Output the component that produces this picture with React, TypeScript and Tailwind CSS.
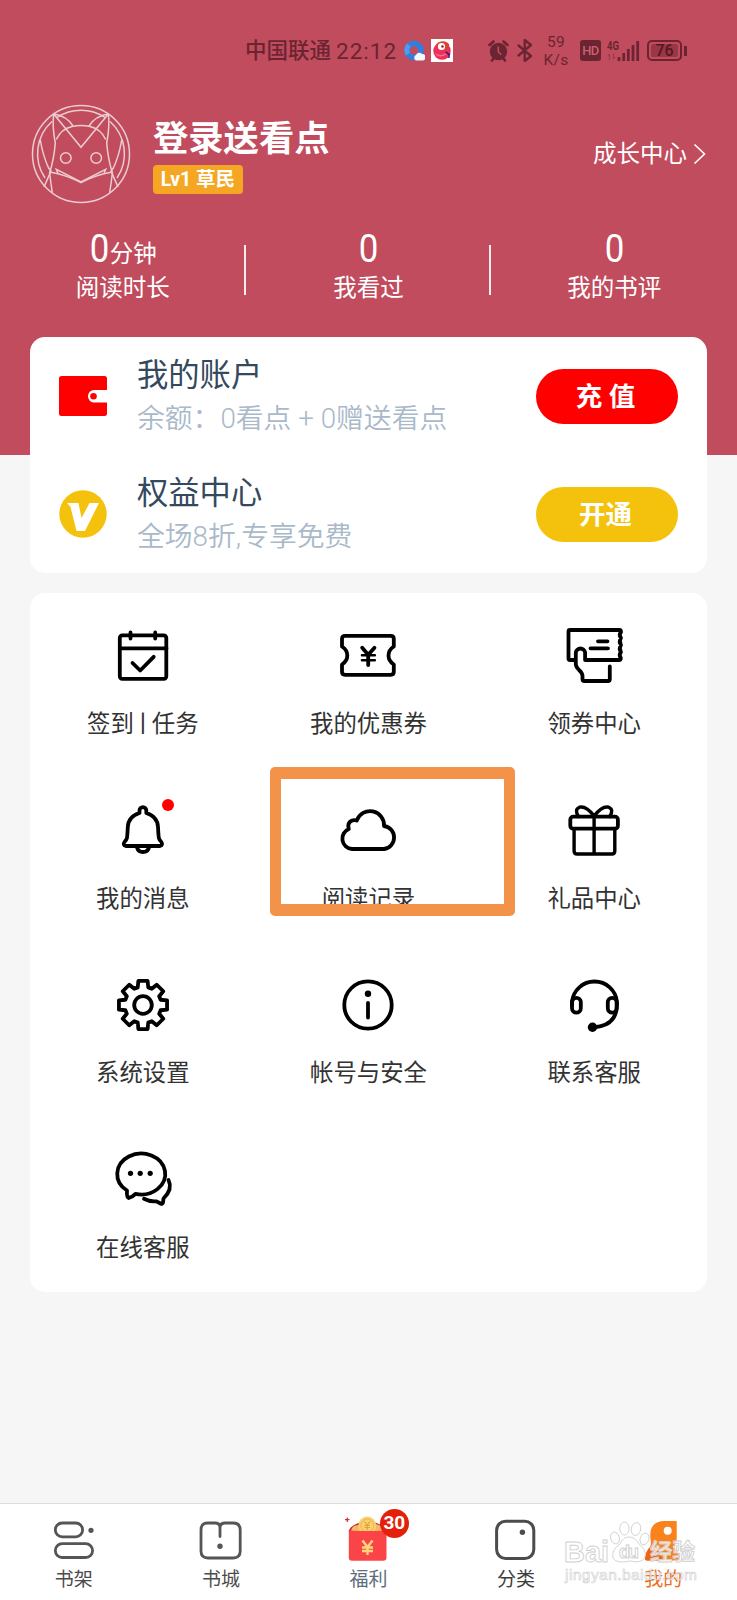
import React from 'react';

const INK = '#6b2431';

const StatusBar: React.FC = () => (
  <div className="flex h-[101px] items-center pl-[245px] text-[#6b2431]">
    <span className="w-[91px] whitespace-nowrap text-[21.500px] leading-6 font-medium">中国联通</span>
    <span className="w-[68px] whitespace-nowrap text-[22.500px] leading-6 tracking-[1px]">22:12</span>
    <svg width="21" height="21" viewBox="0 0 21 21">
      <circle cx="10" cy="10.500" r="7" fill="none" stroke="#2f7fe0" strokeWidth="5.500" />
      <path d="M4 14a7 7 0 0 1 1-9" fill="none" stroke="#4b9dee" strokeWidth="5" />
      <path d="M12 20.500a3 3 0 0 1 0-5.500a3.500 3.500 0 0 1 6-1a3.300 3.300 0 0 1 1 6.500z" fill="#f4f8ff" />
    </svg>
    <svg className="ml-[6px]" width="22" height="23" viewBox="0 0 22 23">
      <rect width="22" height="23" fill="#fff" />
      <circle cx="11" cy="12" r="8.700" fill="#ee2f5b" />
      <path d="M4.500 7a8 8 0 0 1 14-1l-4 6z" fill="#d8432e" />
      <circle cx="10.500" cy="7.500" r="3.600" fill="#fff" />
      <circle cx="11.500" cy="7.500" r="1.300" fill="#a3202f" />
      <path d="M5 15q5 4 11-1" fill="none" stroke="#ff6d8d" strokeWidth="1.500" />
      <path d="M14.500 13l4.500 3m-1-2v5" stroke="#46217c" strokeWidth="1.600" />
    </svg>
    <svg className="ml-[35px]" width="21" height="22" viewBox="0 0 21 22">
      <circle cx="10.500" cy="11.500" r="8.700" fill={INK} />
      <path d="M1.500 5l4-3.500M19.500 5l-4-3.500M4 20.500l2-2.500M17 20.500l-2-2.500" stroke={INK} strokeWidth="2.600" strokeLinecap="round" />
      <path d="M10.300 6.500v5.200l3 3" fill="none" stroke="#c14c5e" strokeWidth="1.600" />
    </svg>
    <svg className="ml-[8px]" width="16" height="23" viewBox="0 0 16 23">
      <path d="M1.500 6.500l12.500 10.500-6.300 5V1l6.300 5L1.500 16.500" fill="none" stroke={INK} strokeWidth="2.300" strokeLinejoin="round" strokeLinecap="round" />
    </svg>
    <span className="ml-[8px] flex w-[30px] flex-col items-center text-[15.500px] leading-[18px] tracking-[0.3px]">
      <span>59</span>
      <span>K/s</span>
    </span>
    <span className="ml-[9px] flex h-[21px] w-[21px] items-center justify-center rounded-[3px] bg-[#6b2431] text-[13px] font-medium tracking-[-0.5px] text-[#c9606f]">HD</span>
    <svg className="ml-[5px] overflow-visible" width="35" height="22" viewBox="0 0 35 22">
      <text x="1" y="9.500" fontSize="12" fontWeight="700" fontFamily="Roboto" fill={INK} textLength="12" lengthAdjust="spacingAndGlyphs">4G</text>
      <path d="M3.500 14v6m-1.500-4l1.500-2M7.500 13v6m1.500-2l-1.500 2" stroke="#9c3b4b" strokeWidth="1.200" fill="none" />
      <path d="M13 17v4M17.700 13v8M22.300 9v12M27 5v16M31.700 1v20" stroke={INK} strokeWidth="2.700" />
    </svg>
    <div className="ml-[6px] flex items-center">
      <div className="flex h-[21px] w-[35px] items-center justify-center rounded-[5px] border-2 border-[#6b2431] p-[2px]">
        <div className="flex h-full w-full items-center justify-center rounded-[2px] bg-[#9a3746] text-[16px] font-medium text-[#521722]">76</div>
      </div>
      <div className="ml-[2px] h-[10px] w-[3px] bg-[#6b2431]" />
    </div>
  </div>
);

const Avatar: React.FC = () => (
  <svg width="100" height="100" viewBox="0 0 100 100" fill="none" stroke="#eccdd1" strokeWidth="1.500">
    <circle cx="50" cy="50" r="48.500" />
    <path d="M26 13.500A43.300 43.300 0 0 1 74 13.500M79 17.500A43.300 43.300 0 0 1 86 74M21 17.500A43.300 43.300 0 0 0 14 74" />
    <path d="M22.700 10L50 43.300L77.300 10" />
    <path d="M22.700 10Q36 12 42 22M77.300 10Q64 12 58 22" />
    <path d="M22.700 10Q21 22 24.300 39Q23 55 18.600 69Q20 80 21.300 88.700M77.300 10Q79 22 75.700 39Q77 55 81.400 69Q80 80 78.700 88.700" />
    <path d="M25.300 35.500Q30 25 41 22.500Q50 20.500 59 22.500Q70 25 74.700 35.500" />
    <path d="M9.300 36Q12 52 17.600 64L20 67L13 83M90.700 36Q88 52 82.400 64L80 67L87 83" />
    <path d="M18.600 68Q36 71 50 78.700Q64 71 81.400 68" />
    <path d="M27 69.500L25.300 65.300L50 78L74.700 65.300L73 69.500" />
    <circle cx="34.800" cy="54" r="5.300" />
    <circle cx="65.200" cy="54" r="5.300" />
  </svg>
);

// outline of an eight-tooth cog around (36, 36)
const gearPath = () => {
  const points: string[] = [];
  for (let i = 0; i < 8; i++) {
    const base = (i * Math.PI) / 4;
    [[-0.29, 18.4], [-0.19, 24.5], [0.19, 24.5], [0.29, 18.4]].forEach(([a, r]) => {
      points.push(`${(36 + r * Math.sin(base + a)).toFixed(2)} ${(36 - r * Math.cos(base + a)).toFixed(2)}`);
    });
  }
  return `M${points.join('L')}Z`;
};

const menuItems = [
  {
    id: 'tasks',
    label: (
      <>
        签到<span className="-mx-[2.700px]">丨</span>任务
      </>
    ),
    icon: (
      <>
        <rect x="12.800" y="15.300" width="46.500" height="43.500" rx="2.500" />
        <path d="M13 28.300H59.500M23.500 12.500V18.500M48.200 12.500V18.500M25.500 43L33.200 50.500L46.700 36.800" />
      </>
    ),
  },
  {
    id: 'coupons',
    label: '我的优惠券',
    icon: (
      <>
        <path d="M13 15.800H58.800Q61.800 15.800 61.800 18.800V26.500Q56.500 30 56.500 35.500Q56.500 41 61.800 44.500V51.800Q61.800 54.800 58.800 54.800H13Q10 54.800 10 51.800V44.500Q15.300 41 15.300 35.500Q15.300 30 10 26.500V18.800Q10 15.800 13 15.800Z" />
        <path d="M30.200 27.800L36.200 34.800L42.500 27.800M36.200 35V45" />
        <path d="M30 35.300H42.800M30 40.300H42.800" strokeWidth="2.600" />
      </>
    ),
  },
  {
    id: 'claim',
    label: '领券中心',
    icon: (
      <>
        <path d="M17 40H12Q10.500 40 10.500 38.500V11.500Q10.500 10 12 10H61.500Q63 10 63 12Q60.500 15 63 18Q60.500 21.500 63 25Q60.500 28.500 63 32Q60.500 35 62.800 38Q62.800 40 61 40H27.100V32.500A4.700 4.700 0 0 0 17.800 32.500V44.500Q18 47 21 50Q24.500 53 24.500 56V59Q24.500 61 26.500 61H50Q51.800 61 51.800 59V46.500" />
        <path d="M40 21.300H49.500M32.500 28.300H50" />
      </>
    ),
  },
  {
    id: 'messages',
    label: '我的消息',
    dot: true,
    icon: (
      <>
        <path d="M32.500 18V15.500A3.400 3.400 0 0 1 39.300 15.500V18Q50.500 21.500 51 32Q51.500 42 52 43.500Q52.500 45 54 46.500Q56.500 50 53 51H18.800Q15.300 50 17.800 46.500Q19.300 45 19.800 43.500Q20.300 42 20.800 32Q21.300 21.500 32.500 18Z" />
        <path d="M30 52.500A6.200 6 0 0 0 42 52.500" />
      </>
    ),
  },
  {
    id: 'history',
    label: '阅读记录',
    icon: <path d="M20 54A10.400 10.400 0 0 1 16.800 34Q15 28 19.500 25.800Q22 24.500 24.800 25.500A14 14 0 0 1 52 31A11.600 11.600 0 0 1 52 54Z" />,
  },
  {
    id: 'gifts',
    label: '礼品中心',
    icon: (
      <>
        <rect x="12.300" y="21.700" width="47.600" height="12" rx="3" />
        <path d="M16.100 33.700V56Q16.100 59 19.100 59H53.800Q56.800 59 56.800 56V33.700M36.100 21V59" strokeWidth="3.400" />
        <path d="M20.500 21.500Q16 14.500 21.500 12.200Q28 10.500 36.100 21M51.700 21.500Q56.200 14.500 50.700 12.200Q44.200 10.500 36.100 21" strokeWidth="3.400" />
      </>
    ),
  },
  {
    id: 'settings',
    label: '系统设置',
    icon: (
      <>
        <path d={gearPath()} />
        <circle cx="36" cy="36" r="8.800" />
      </>
    ),
  },
  {
    id: 'security',
    label: '帐号与安全',
    icon: (
      <>
        <circle cx="36" cy="36" r="23.700" />
        <circle cx="36" cy="24.700" r="3.200" fill="#000" stroke="none" />
        <path d="M36 33.800V48.500" />
      </>
    ),
  },
  {
    id: 'contact',
    label: '联系客服',
    icon: (
      <>
        <path d="M14 36V33A22.600 22.600 0 0 1 59 33V36Q58.500 57 35 58.300" />
        <rect x="14" y="28.800" width="8.800" height="14.800" rx="4.400" />
        <rect x="49.800" y="28.800" width="8.800" height="14.800" rx="4.400" />
        <circle cx="34.500" cy="58.300" r="4.700" fill="#000" stroke="none" />
      </>
    ),
  },
  {
    id: 'online',
    label: '在线客服',
    icon: (
      <>
        <path d="M20 46.500A24 20.500 0 1 1 28.500 49.900Q25 53.500 21.500 54Q19.500 53.500 20 46.500Z" />
        <path d="M61.500 36Q66 45 56.500 54.500L56 58.500Q55.500 60.500 53.500 59.500L49.500 57.300Q43 58 37 54.800" />
        <g fill="#000" stroke="none">
          <circle cx="23.500" cy="29.300" r="2.600" />
          <circle cx="33.200" cy="29.300" r="2.600" />
          <circle cx="43.200" cy="29.300" r="2.600" />
        </g>
      </>
    ),
  },
];

const stats = [
  { value: '0', unit: '分钟', label: '阅读时长' },
  { value: '0', unit: '', label: '我看过' },
  { value: '0', unit: '', label: '我的书评' },
];

const navItems = [
  {
    label: '书架',
    color: 'text-[#4c4c4c]',
    icon: (
      <g fill="none" stroke="#555" strokeWidth="2.800">
        <rect x="3.300" y="4" width="27.300" height="13.800" rx="6.900" />
        <rect x="3.300" y="24.700" width="37.300" height="13.800" rx="6.900" />
        <circle cx="39" cy="11.300" r="2.600" fill="#555" stroke="none" />
      </g>
    ),
  },
  {
    label: '书城',
    color: 'text-[#4c4c4c]',
    icon: (
      <g fill="none" stroke="#555" strokeWidth="2.800" strokeLinecap="round">
        <path d="M21 17.500V9Q21 4 16 4H8.500Q2 4 2 11V32Q2 39 9 39H34.200Q41.200 39 41.200 32V11Q41.200 4 34.200 4H26Q21 4 21 9" />
        <circle cx="21" cy="27.300" r="2.700" fill="#555" stroke="none" />
      </g>
    ),
  },
  {
    label: '福利',
    color: 'text-[#5d6d7b]',
    badge: '30',
    icon: (
      <>
        <path d="M2.800 13Q3 5 21.600 2Q40 5 40.500 13Z" fill="#c9252c" />
        <path d="M5 12Q6 5 14 6L30 5Q38 7 38 12Z" fill="#f4b765" />
        <circle cx="21.300" cy="6.500" r="9" fill="#fbd06e" />
        <circle cx="21.300" cy="6.500" r="6.500" fill="none" stroke="#e9ab45" strokeWidth="0.800" />
        <path d="M18.500 2.500L21.300 6L24 2.500M21.300 6V11M18.500 6.500H24M18.500 8.500H24" fill="none" stroke="#e2a040" strokeWidth="1.200" />
        <path d="M2.800 11.500Q21 12.500 40.500 11.500V38.500Q40.500 41.700 37.300 41.700H6Q2.800 41.700 2.800 38.500Z" fill="#fb4448" />
        <path d="M16.500 21.500L21.500 28L26.500 21.500M21.500 28V36M16 28.500H27M16 32H27" fill="none" stroke="#ffd57c" strokeWidth="2.400" />
        <path d="M1.300 -1.500V3M-1 0.700H3.500" stroke="#cf3034" strokeWidth="1.200" />
      </>
    ),
  },
  {
    label: '分类',
    color: 'text-[#3d3d3d]',
    icon: (
      <>
        <rect x="2.600" y="2.200" width="37.200" height="37.300" rx="9" fill="none" stroke="#4c4c4c" strokeWidth="3" />
        <circle cx="28.400" cy="13.300" r="2.700" fill="#4c4c4c" />
      </>
    ),
  },
  {
    label: '我的',
    color: 'text-[#ee6a16]',
    icon: (
      <>
        <path d="M35.700 2V20Q35 25 31.500 28Q38.500 31 38.500 41.500H5.500Q4 41.500 4 39Q5 32 9 28Q10.500 25 9.500 20Q7.500 2 24 2Z" fill="#f9821c" />
        <path d="M9 28Q20 31 21 41.500H5.500Q4 41.500 4 39Q5 32 9 28Z" fill="#ee6410" />
        <circle cx="26.700" cy="11.700" r="4" fill="#fff" />
      </>
    ),
  },
];

const Watermark: React.FC = () => (
  <svg className="pointer-events-none absolute top-[14px] left-[560px]" width="142" height="68" viewBox="0 0 142 68" fontFamily='"Liberation Sans", "Noto Sans CJK SC", sans-serif'>
    <g fill="#ffffff" fillOpacity="0.75" stroke="#cfcfcf" strokeWidth="0.900">
      <ellipse cx="55" cy="20" rx="4.300" ry="6" transform="rotate(-15 55 20)" />
      <ellipse cx="64.500" cy="10.500" rx="4.700" ry="6.500" />
      <ellipse cx="76" cy="11" rx="4.700" ry="6.500" transform="rotate(12 76 11)" />
      <ellipse cx="84.500" cy="21" rx="4.300" ry="6" transform="rotate(20 84.500 21)" />
      <path d="M69 19Q75 19 79 26Q87 32 85 39Q82 46 70 43Q56 46 53 40Q51 32 60 26Q63 19 69 19Z" />
      <text x="4" y="43.500" fontSize="29" fontWeight="700" textLength="45" lengthAdjust="spacingAndGlyphs">Bai</text>
      <text x="59" y="39.500" fontSize="18" fontWeight="700" textLength="20">du</text>
      <text x="90" y="41.500" fontSize="22.500" fontWeight="700">经验</text>
      <text x="5" y="61.500" fontSize="15.500" strokeWidth="0.600" textLength="132">jingyan.baidu.com</text>
    </g>
  </svg>
);

interface AccountRowProps {
  icon: React.ReactNode;
  title: string;
  detail: string;
  action: string;
  actionColor: string;
}

const AccountRow: React.FC<AccountRowProps> = ({ icon, title, detail, action, actionColor }) => (
  <div className="flex h-[118px] items-center pr-[29px] pl-[29px]">
    <div className="w-[78px]">{icon}</div>
    <div className="flex-1 pt-[3px] whitespace-nowrap">
      <div className="text-[31.300px] leading-[43px] text-[#34495e]">{title}</div>
      <div className="text-[27.800px] leading-[44px] font-[350] text-[#a9b9c9]">{detail}</div>
    </div>
    <button className={`h-[55px] w-[142px] rounded-full pt-[2px] pr-[3px] text-[26.500px] font-bold whitespace-pre text-white ${actionColor}`}>{action}</button>
  </div>
);

const App: React.FC = () => {
  return (
    <div className="relative flex h-[1600px] w-[737px] flex-col overflow-hidden bg-[#f6f6f6] font-['Roboto','Noto_Sans_CJK_SC',sans-serif]">
      <header className="h-[455px] shrink-0 bg-[#c14c5e] text-white">
        <StatusBar />
        <div className="flex h-[105px] items-center pr-[31px] pl-[31px]">
          <Avatar />
          <div className="ml-[22px] flex-1 pt-[4px]">
            <div className="text-[35.300px] leading-[42px] font-bold">登录送看点</div>
            <div className="mt-[5px] flex h-[29px] w-[90px] items-center justify-center rounded-[4px] bg-[#f5a623] pt-[1px] text-[19.500px] font-bold whitespace-nowrap">Lv1 草民</div>
          </div>
          <span className="text-[23.500px] leading-8">成长中心</span>
          <svg className="ml-[6px]" width="13" height="22" viewBox="0 0 13 22">
            <path d="M1.500 1.500L11.500 11L1.500 20.500" fill="none" stroke="#fff" strokeWidth="1.600" />
          </svg>
        </div>
        <div className="mt-[24px] grid h-[78px] grid-cols-3">
          {stats.map((s, i) => (
            <div key={s.label} className="flex items-center">
              <div className="flex-1 text-center">
                <div className="h-[38px] text-[37.500px] leading-[36px]">
                  <span className="inline-block scale-x-[0.930] scale-y-[1.020]">{s.value}</span>
                  <span className="text-[23.500px]">{s.unit}</span>
                </div>
                <div className="text-[23.500px] leading-[38px]">{s.label}</div>
              </div>
              {i < 2 && <div className="mt-[2px] -ml-[2px] h-[50px] w-[2px] bg-white/90" />}
            </div>
          ))}
        </div>
      </header>

      <section className="z-10 mx-[30px] -mt-[118px] h-[236px] shrink-0 rounded-[15px] bg-white">
        <AccountRow
          icon={
            <svg width="48" height="40" viewBox="0 0 48 40">
              <path d="M2.500 0H45.500Q48 0 48 2.500V14H34.500A6.300 6.300 0 0 0 34.500 26.500H48V37.500Q48 40 45.500 40H2.500Q0 40 0 37.500V2.500Q0 0 2.500 0Z" fill="#ff0000" />
              <circle cx="34.500" cy="20.300" r="3.300" fill="#ff0000" />
            </svg>
          }
          title="我的账户"
          detail="余额：0看点 + 0赠送看点"
          action="充 值"
          actionColor="bg-[#ff0000]"
        />
        <AccountRow
          icon={
            <svg width="48" height="48" viewBox="0 0 48 48">
              <circle cx="24" cy="24" r="23.700" fill="#f4c20d" />
              <path d="M8 13H19.500L22.500 28L30.500 13H40L26 41H17.500L11.500 17Z" fill="#fff" />
            </svg>
          }
          title="权益中心"
          detail="全场8折,专享免费"
          action="开通"
          actionColor="bg-[#f4c20d]"
        />
      </section>

      <section className="mx-[30px] mt-[20px] grid h-[699px] shrink-0 auto-rows-[174.600px] grid-cols-3 rounded-[15px] bg-white pt-[27px]">
        {menuItems.map((item) => (
          <div key={item.id} className="relative flex flex-col items-center">
            <svg width="72" height="72" viewBox="0 0 72 72" fill="none" stroke="#000" strokeWidth="3.800" strokeLinecap="round" strokeLinejoin="round">
              {item.icon}
            </svg>
            {item.dot && <span className="absolute top-[4px] left-[132px] h-3 w-3 rounded-full bg-[#ff0000]" />}
            <span className="mt-[15px] text-[23.400px] leading-[34px] whitespace-nowrap text-[#333]">{item.label}</span>
          </div>
        ))}
      </section>

      {/* highlight around the reading history entry */}
      <div className="absolute top-[767px] left-[270px] z-20 h-[149px] w-[245px] rounded-[5px] border-x-11 border-y-12 border-[#f39249]" />

      <nav className="relative mt-auto grid h-[97px] shrink-0 grid-cols-5 border-t border-[#dcdfe0] bg-white pt-[15px]">
        {navItems.map((item) => (
          <div key={item.label} className="relative flex flex-col items-center">
            <svg className="overflow-visible" width="44" height="44" viewBox="0 0 44 44">
              {item.icon}
            </svg>
            <span className={`mt-[3px] text-[19px] leading-[28px] ${item.color}`}>{item.label}</span>
            {item.badge && (
              <span className="absolute -top-[10px] left-[85px] flex h-[29px] w-[29px] items-center justify-center rounded-full bg-[#e3210b] text-[19px] font-bold text-white">{item.badge}</span>
            )}
          </div>
        ))}
        <Watermark />
      </nav>
    </div>
  );
};

export default App;
